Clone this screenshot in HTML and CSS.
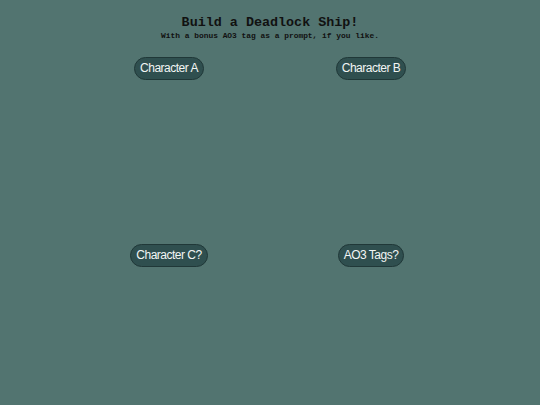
FILE: index.html
```html
<!DOCTYPE html>
<html lang="en">
<head>
    <meta charset="UTF-8" />
    <meta name="viewport" content="width=device-width, initial-scale=1" />
    <title>Build a Deadlock Ship!</title>
    <link rel="stylesheet" href="styles.css">
</head>
<body>
    <header class="header">
        <h1>Build a Deadlock Ship!</h1>
        <p class="subtitle">With a bonus AO3 tag as a prompt, if you like.</p>
    </header>
    <main class="picker">
        <div class="slot"><button class="pick-btn" id="char-a-btn">Character A</button></div>
        <div class="slot"><button class="pick-btn" id="char-b-btn">Character B</button></div>
        <div class="slot"><button class="pick-btn" id="char-c-btn">Character C?</button></div>
        <div class="slot"><button class="pick-btn" id="tags-btn">AO3 Tags?</button></div>
    </main>
</body>
</html>
```

FILE: styles.css
```css
html {
    background: #527470;
}
body {
    margin: 0;
    color: #111;
    font-family: 'Liberation Mono', 'Courier New', monospace;
}
.header {
    padding-top: 16px;
    text-align: center;
}
h1 {
    margin: 0;
    font-size: 13.4px;
    font-weight: bold;
    line-height: 13px;
}
.subtitle {
    margin: 2px 0 0 0;
    font-size: 7.9px;
    font-weight: bold;
    line-height: 9px;
}
.picker {
    width: 404px;
    margin: 17px auto 0 auto;
    display: grid;
    grid-template-columns: 1fr 1fr;
    grid-template-rows: 187px auto;
}
.slot {
    display: flex;
    justify-content: center;
    align-items: flex-start;
}
.pick-btn {
    padding: 3px 5px 4px 5px;
    background: #2f4f4f;
    color: #f2f5f4;
    border: 1px solid #203838;
    border-radius: 12px;
    font-family: 'Liberation Sans', Arial, sans-serif;
    font-size: 12px;
    letter-spacing: -0.5px;
    line-height: 14px;
    cursor: pointer;
}
.pick-btn:hover {
    background: #3a5e5e;
}
```
